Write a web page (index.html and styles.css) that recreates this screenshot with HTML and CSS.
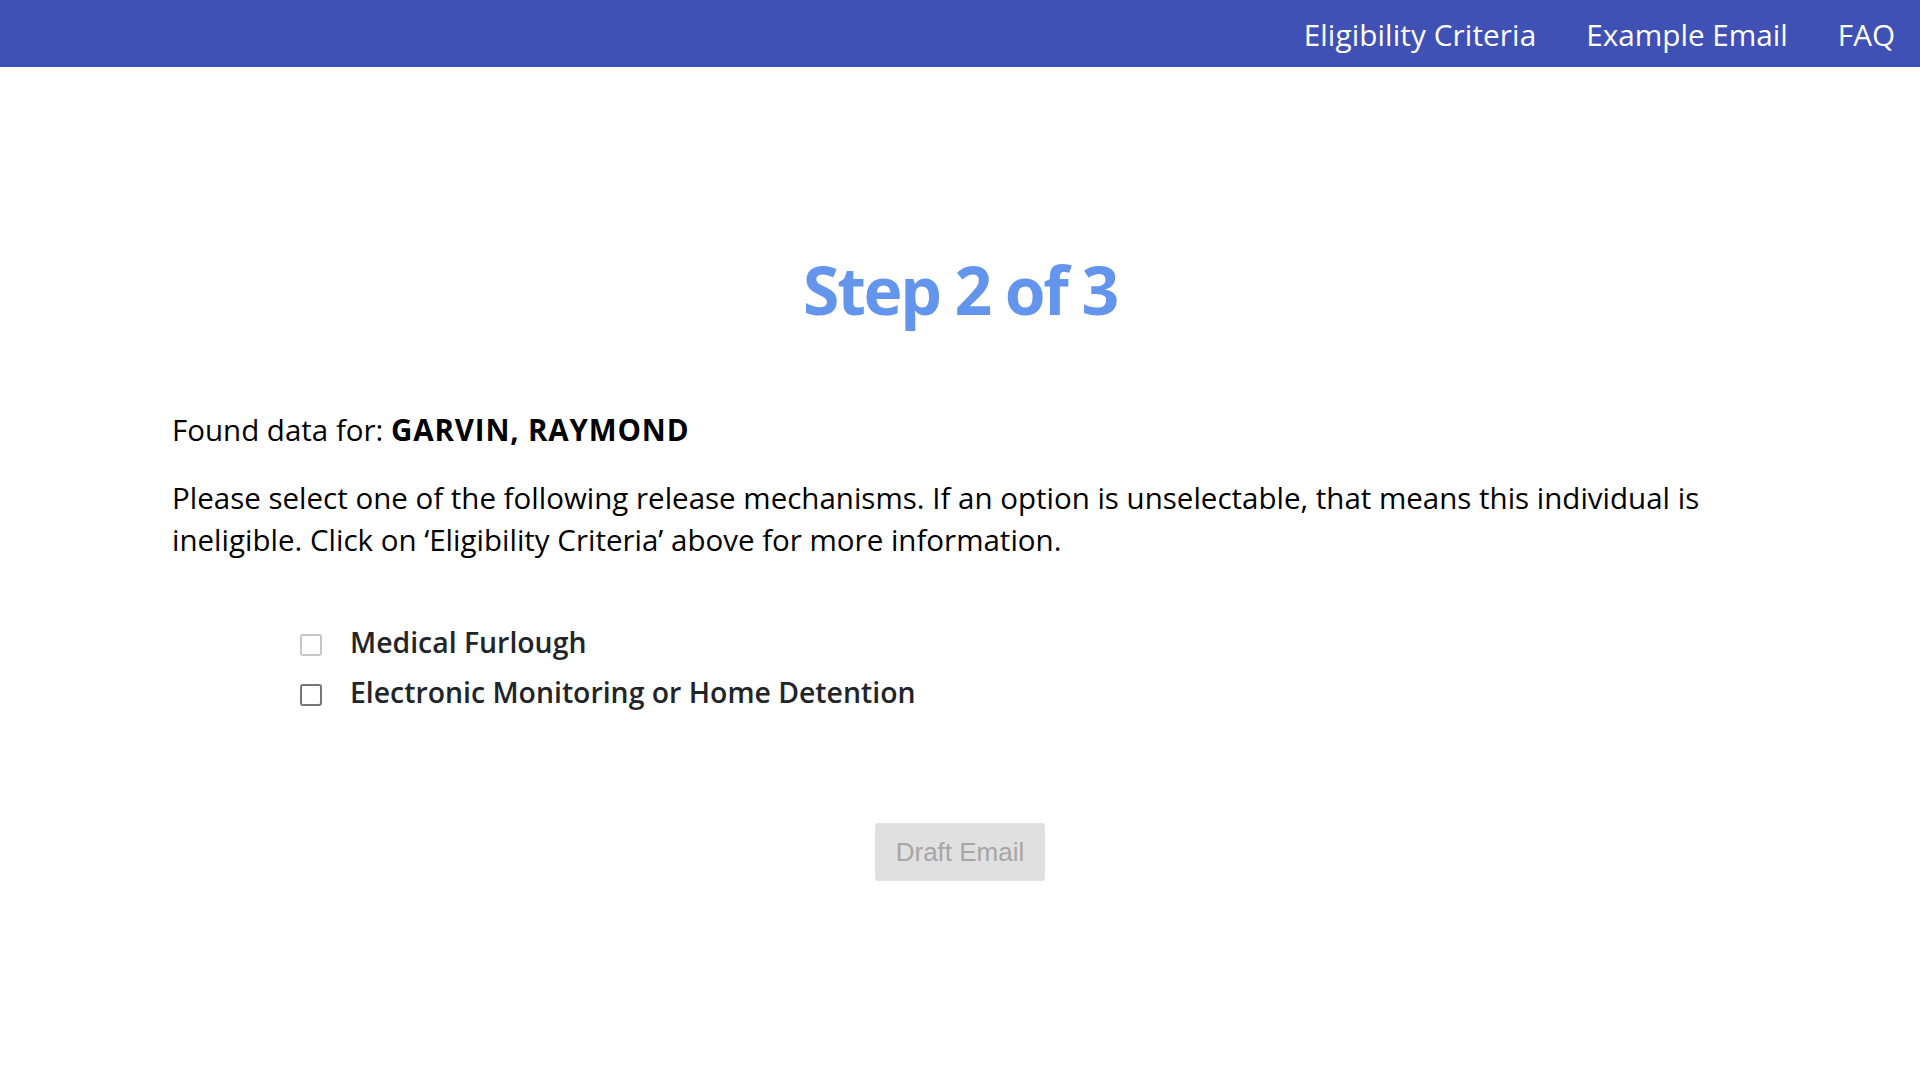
FILE: index.html
```html
<!DOCTYPE html>
<html lang="en">
<head>
<meta charset="utf-8">
<title>Step 2 of 3</title>
<link rel="stylesheet" href="styles.css">
</head>
<body>
<header class="topbar">
  <nav class="nav">
    <a class="nav-link" href="#">Eligibility Criteria</a>
    <a class="nav-link" href="#">Example Email</a>
    <a class="nav-link" href="#">FAQ</a>
  </nav>
</header>
<main class="content">
  <h1 class="step-title">Step 2 of 3</h1>
  <p class="found">Found data for: <strong>GARVIN, RAYMOND</strong></p>
  <p class="instructions">Please select one of the following release mechanisms. If an option is unselectable, that means this individual is ineligible. Click on ‘Eligibility Criteria’ above for more information.</p>
  <ul class="options">
    <li class="option">
      <input class="check" type="checkbox" id="opt1" disabled>
      <label class="option-label" for="opt1">Medical Furlough</label>
    </li>
    <li class="option">
      <input class="check" type="checkbox" id="opt2">
      <label class="option-label" for="opt2">Electronic Monitoring or Home Detention</label>
    </li>
  </ul>
  <div class="actions">
    <button class="draft-btn" type="button" disabled>Draft Email</button>
  </div>
</main>
</body>
</html>
```

FILE: styles.css
```css
html, body {
  margin: 0;
  padding: 0;
  background: #ffffff;
}

body {
  font-family: "Open Sans", "Noto Sans", sans-serif;
  color: #000000;
}

.topbar {
  height: 67px;
  background: #3f51b5;
  display: flex;
  justify-content: flex-end;
  align-items: center;
}

.nav {
  display: flex;
  gap: 50px;
  padding-right: 25px;
  padding-top: 2px;
}

.nav-link {
  color: #ffffff;
  text-decoration: none;
  font-size: 29.7px;
  line-height: 40px;
}

.nav-link:first-child {
  letter-spacing: 0.1px;
}

.content {
  padding: 0 172px;
}

.step-title {
  margin: 182px 0 0;
  text-align: center;
  color: #6495ed;
  font-size: 66px;
  line-height: 80px;
  font-weight: 700;
  letter-spacing: -2.3px;
}

.found {
  margin: 80px 0 0;
  font-size: 29.5px;
  line-height: 42px;
}

.found strong {
  font-weight: 700;
  letter-spacing: 0.85px;
}

.instructions {
  margin: 26px 0 0;
  font-size: 29.5px;
  line-height: 42px;
}

.options {
  list-style: none;
  margin: 60px 0 0;
  padding: 0 0 0 128px;
  display: flex;
  flex-direction: column;
  gap: 8px;
}

.option {
  display: flex;
  align-items: center;
  gap: 28px;
  height: 42px;
}

.check {
  appearance: none;
  -webkit-appearance: none;
  margin: 5px 0 0;
  width: 22px;
  height: 22px;
  border: 2px solid #767676;
  border-radius: 3px;
  background: #ffffff;
  box-sizing: border-box;
}

.check:disabled {
  border-color: #c6c6c6;
}

.option-label {
  font-size: 28.4px;
  line-height: 42px;
  font-weight: 600;
  color: #212529;
}

.actions {
  display: flex;
  justify-content: center;
  margin-top: 110px;
}

.draft-btn {
  font-family: "Liberation Sans", Arial, sans-serif;
  font-size: 26px;
  line-height: 30px;
  padding: 14px 21px 14px;
  border: none;
  border-radius: 4px;
  background: #e0e0e0;
  color: #a6a6a6;
}
```
